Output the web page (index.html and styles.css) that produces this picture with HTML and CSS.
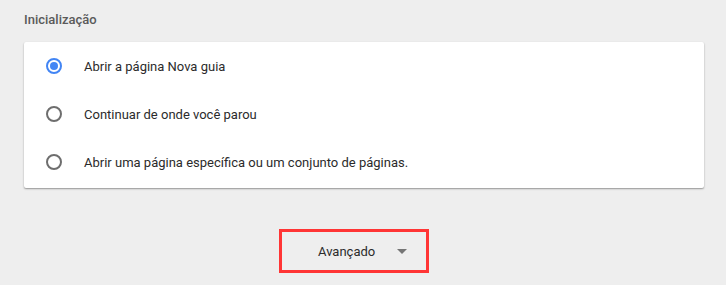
FILE: index.html
```html
<!DOCTYPE html>
<html lang="pt">
<head>
<meta charset="utf-8">
<link rel="stylesheet" href="styles.css">
</head>
<body>
<h2 class="section-title">Inicialização</h2>
<div class="card">
  <label class="row">
    <span class="radio checked"></span>
    <span class="label">Abrir a página Nova guia</span>
  </label>
  <label class="row">
    <span class="radio"></span>
    <span class="label">Continuar de onde você parou</span>
  </label>
  <label class="row">
    <span class="radio"></span>
    <span class="label">Abrir uma página específica ou um conjunto de páginas.</span>
  </label>
</div>
<div class="advanced-wrap">
  <div class="advanced">
    <span class="adv-text">Avançado</span>
    <span class="arrow"></span>
  </div>
</div>
</body>
</html>
```
FILE: styles.css
```css
html, body {
  margin: 0;
  padding: 0;
  background: #eeeeee;
  font-family: Roboto, "Liberation Sans", Arial, sans-serif;
}
.section-title {
  margin: 0;
  padding: 12px 0 0 24px;
  height: 30px;
  font-size: 13px;
  line-height: 16px;
  font-weight: 500;
  color: #5a5a5a;
}
.card {
  margin: 0 22px 0 24px;
  background: #fff;
  border-radius: 2px;
  box-shadow: 0 1px 2px rgba(0,0,0,0.3), 0 1px 1px rgba(0,0,0,0.1);
  padding: 0 0 2px;
}
.row {
  display: flex;
  align-items: center;
  height: 48px;
  padding-left: 22px;
}
.radio {
  box-sizing: border-box;
  width: 16px;
  height: 16px;
  border: 2px solid #6e6e6e;
  border-radius: 50%;
  margin-right: 22px;
  flex: none;
  position: relative;
}
.radio.checked {
  border-color: #4285f4;
}
.radio.checked::after {
  content: "";
  position: absolute;
  left: 2px;
  top: 2px;
  width: 8px;
  height: 8px;
  border-radius: 50%;
  background: #4285f4;
}
.label {
  font-size: 13px;
  color: #2b2b2b;
}
.advanced-wrap {
  display: flex;
  padding: 41px 0 0 279px;
}
.advanced {
  box-sizing: border-box;
  width: 150px;
  height: 44px;
  border: 3px solid #ff3535;
  display: flex;
  align-items: center;
  padding-left: 36px;
}
.adv-text {
  font-size: 13px;
  color: #2b2b2b;
}
.arrow {
  margin-left: 22px;
  width: 0;
  height: 0;
  border-left: 5px solid transparent;
  border-right: 5px solid transparent;
  border-top: 5px solid #757575;
}
```
